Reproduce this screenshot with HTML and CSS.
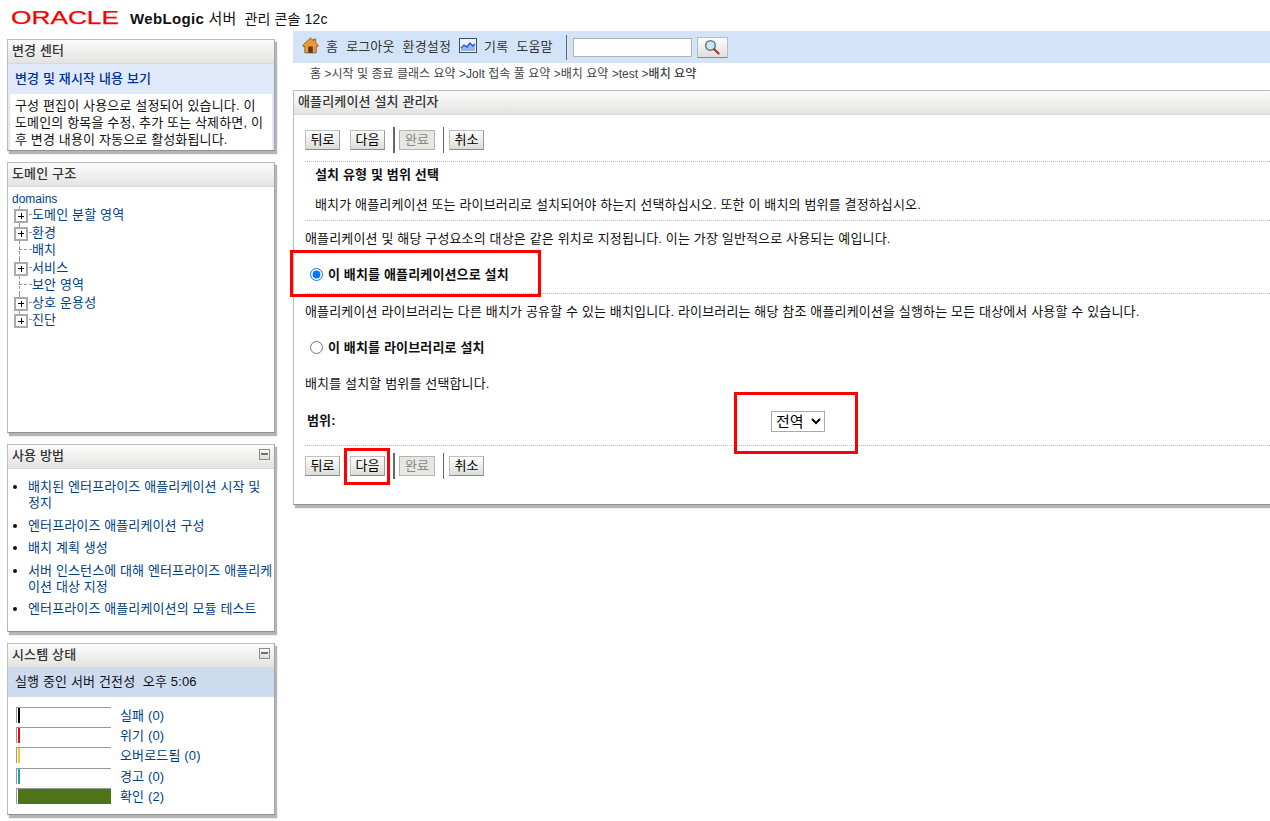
FILE: index.html
```html
<!DOCTYPE html>
<html lang="ko">
<head>
    <meta charset="UTF-8">
    <title>WebLogic 서버 관리 콘솔 12c</title>
    <link rel="stylesheet" href="styles.css">
</head>
<body>
    <!-- Page title -->
    <div class="brand">
        <svg class="oracle-logo" width="109" height="20" viewBox="0 0 109 20"><text x="0" y="16.5" textLength="108" lengthAdjust="spacingAndGlyphs">ORACLE</text></svg>
        <span class="brand-name"><b>WebLogic</b> 서버</span>
        <span class="brand-sub">관리 콘솔 12c</span>
    </div>

    <div class="layout">
        <!-- Left column -->
        <div class="sidebar">
            <div class="box box-change">
                <div class="box-head">변경 센터</div>
                <div class="change-link"><a href="#">변경 및 재시작 내용 보기</a></div>
                <div class="change-body">
                    <p>구성 편집이 사용으로 설정되어 있습니다. 이 도메인의 항목을 수정, 추가 또는 삭제하면, 이후 변경 내용이 자동으로 활성화됩니다.</p>
                </div>
            </div>

            <div class="box box-tree">
                <div class="box-head">도메인 구조</div>
                <div class="tree">
                    <a class="tree-root" href="#">domains</a>
                    <div class="tree-row"><span class="tree-plus"></span><a href="#">도메인 분할 영역</a></div>
                    <div class="tree-row"><span class="tree-plus"></span><a href="#">환경</a></div>
                    <div class="tree-row"><span class="tree-leaf"></span><a href="#">배치</a></div>
                    <div class="tree-row"><span class="tree-plus"></span><a href="#">서비스</a></div>
                    <div class="tree-row"><span class="tree-leaf"></span><a href="#">보안 영역</a></div>
                    <div class="tree-row"><span class="tree-plus"></span><a href="#">상호 운용성</a></div>
                    <div class="tree-row tree-last"><span class="tree-plus"></span><a href="#">진단</a></div>
                </div>
            </div>

            <div class="box box-help">
                <div class="box-head">사용 방법<span class="collapse"></span></div>
                <ul class="help-list">
                    <li><a href="#">배치된 엔터프라이즈 애플리케이션 시작 및 정지</a></li>
                    <li><a href="#">엔터프라이즈 애플리케이션 구성</a></li>
                    <li><a href="#">배치 계획 생성</a></li>
                    <li><a href="#">서버 인스턴스에 대해 엔터프라이즈 애플리케이션 대상 지정</a></li>
                    <li><a href="#">엔터프라이즈 애플리케이션의 모듈 테스트</a></li>
                </ul>
            </div>

            <div class="box box-status">
                <div class="box-head">시스템 상태<span class="collapse"></span></div>
                <div class="status-title">실행 중인 서버 건전성 &nbsp;오후 5:06</div>
                <div class="status-rows">
                    <div class="status-row"><span class="bar"><i class="bar-failed"></i></span><a href="#">실패 (0)</a></div>
                    <div class="status-row"><span class="bar"><i class="bar-critical"></i></span><a href="#">위기 (0)</a></div>
                    <div class="status-row"><span class="bar"><i class="bar-overload"></i></span><a href="#">오버로드됨 (0)</a></div>
                    <div class="status-row"><span class="bar"><i class="bar-warn"></i></span><a href="#">경고 (0)</a></div>
                    <div class="status-row"><span class="bar"><i class="bar-ok"></i></span><a href="#">확인 (2)</a></div>
                </div>
            </div>
        </div>

        <!-- Main column -->
        <div class="main">
            <div class="topbar">
                <svg class="icon-home" width="17" height="17" viewBox="0 0 18 18">
                    <path d="M9 1 0.6 9 2 10.6 3 9.7V16.8H15V9.7L16 10.6 17.4 9 14.5 6.3V2.2H12.2V4Z" fill="#ec9a35" stroke="#8a5a1e" stroke-width=".9"/>
                    <rect x="6.6" y="10" width="4.8" height="6.8" fill="#5a3a1a"/>
                </svg>
                <a href="#">홈</a>
                <a href="#">로그아웃</a>
                <a href="#">환경설정</a>
                <svg class="icon-chart" width="18" height="15" viewBox="0 0 18 15">
                    <rect x=".5" y=".5" width="17" height="14" fill="#eaf1fb" stroke="#3f4f5f"/>
                    <path d="M2 10 5 7 8 9 11 5 14 8 16 6V13H2Z" fill="#8fb8ee"/>
                    <path d="M2 10 5 7 8 9 11 5 14 8 16 6" fill="none" stroke="#1f55d8" stroke-width="1.3"/>
                </svg>
                <a href="#">기록</a>
                <a href="#">도움말</a>
                <span class="topbar-sep"></span>
                <input class="search-input" type="text">
                <button class="search-btn" type="button">
                    <svg width="16" height="16" viewBox="0 0 16 16">
                        <circle cx="6.5" cy="6.5" r="4.8" fill="#cfe6f5" stroke="#5f7f95" stroke-width="1.6"/>
                        <path d="M10 10 14.5 14.5" stroke="#a3452a" stroke-width="2.4" stroke-linecap="round"/>
                    </svg>
                </button>
            </div>

            <div class="crumbs">홈 &gt;시작 및 종료 클래스 요약 &gt;Jolt 접속 풀 요약 &gt;배치 요약 &gt;test &gt;<b>배치 요약</b></div>

            <div class="box box-main">
                <div class="box-head">애플리케이션 설치 관리자</div>
                <div class="main-body">
                    <div class="btn-row btn-row-top">
                        <button class="btn" type="button">뒤로</button>
                        <button class="btn" type="button">다음</button>
                        <span class="btn-sep-thick"></span>
                        <button class="btn" type="button" disabled>완료</button>
                        <span class="btn-sep"></span>
                        <button class="btn" type="button">취소</button>
                    </div>

                    <h2 class="step-title">설치 유형 및 범위 선택</h2>
                    <p class="step-desc">배치가 애플리케이션 또는 라이브러리로 설치되어야 하는지 선택하십시오. 또한 이 배치의 범위를 결정하십시오.</p>

                    <div class="section section-line">
                        <p>애플리케이션 및 해당 구성요소의 대상은 같은 위치로 지정됩니다. 이는 가장 일반적으로 사용되는 예입니다.</p>
                        <label class="radio-row"><input type="radio" name="kind" checked>이 배치를 애플리케이션으로 설치</label>
                    </div>
                    <div class="section">
                        <p>애플리케이션 라이브러리는 다른 배치가 공유할 수 있는 배치입니다. 라이브러리는 해당 참조 애플리케이션을 실행하는 모든 대상에서 사용할 수 있습니다.</p>
                        <label class="radio-row"><input type="radio" name="kind">이 배치를 라이브러리로 설치</label>
                    </div>
                    <div class="section section-scope">
                        <p>배치를 설치할 범위를 선택합니다.</p>
                        <div class="scope-row">
                            <b>범위:</b>
                            <select class="scope-select"><option>전역</option></select>
                        </div>
                    </div>

                    <div class="btn-row btn-row-bottom">
                        <button class="btn" type="button">뒤로</button>
                        <button class="btn" type="button">다음</button>
                        <span class="btn-sep-thick"></span>
                        <button class="btn" type="button" disabled>완료</button>
                        <span class="btn-sep"></span>
                        <button class="btn" type="button">취소</button>
                    </div>
                </div>

                <!-- Red annotation boxes drawn over the page -->
                <span class="mark mark-radio"></span>
                <span class="mark mark-select"></span>
                <span class="mark mark-next"></span>
            </div>
        </div>
    </div>
</body>
</html>
```

FILE: styles.css
```css
* {
    box-sizing: border-box;
}

html, body {
    height: 821px;
    overflow: hidden;
}

body {
    margin: 0;
    font-family: "Liberation Sans", "Noto Sans CJK KR", sans-serif;
    font-size: 13px;
    line-height: 16px;
    letter-spacing: .15px;
    color: #111;
    background-color: #fff;
}

a {
    color: #003f7f;
    text-decoration: none;
}

p {
    margin: 0;
}

/* Page title */
.brand {
    height: 31px;
    padding: 7px 0 0 11px;
    display: flex;
    align-items: flex-start;
}

.oracle-logo {
    margin-right: 10px;
}

.oracle-logo text {
    font-family: "Liberation Sans", sans-serif;
    font-size: 19px;
    letter-spacing: 0;
    fill: #f80000;
    stroke: #f80000;
    stroke-width: .25px;
}

.brand-name {
    font-size: 15px;
    line-height: 24px;
}

.brand-name b {
    letter-spacing: .35px;
}

.brand-sub {
    font-size: 14px;
    line-height: 24px;
    margin-left: 8px;
}

/* Layout */
.layout {
    display: flex;
    align-items: flex-start;
}

.sidebar {
    width: 268px;
    margin: 8px 0 0 7px;
    flex: none;
}

.main {
    width: 977px;
    margin-left: 18px;
    flex: none;
}

/* Boxes */
.box {
    position: relative;
    background-color: #fff;
    border: 1px solid #b9bdc0;
    border-bottom-color: #8d9194;
    border-right-color: #a5a8ab;
    box-shadow: 2px 3px 1px #b5b5b5;
    margin-bottom: 11px;
}

.box-head {
    position: relative;
    height: 24px;
    padding: 3px 4px;
    font-weight: 500;
    color: #333;
    background: linear-gradient(#fbfbfb, #e3e4e2);
    border-bottom: 1px solid #d9dad8;
}

.collapse {
    position: absolute;
    top: 4px;
    right: 4px;
    width: 11px;
    height: 11px;
    border: 1px solid #8b8f85;
    background: linear-gradient(#fff, #dcdcd4);
}

.collapse::after {
    content: "";
    position: absolute;
    left: 1px;
    top: 3px;
    width: 7px;
    height: 2px;
    background-color: #707468;
}

/* Change center */
.box-change {
    height: 112px;
    background-color: #dfe9f9;
}

.change-link {
    height: 30px;
    padding: 7px 7px;
    font-weight: 500;
}

.change-link a {
    color: #00309c;
}

.change-body {
    margin: 0 2px;
    padding: 3px 7px 3px 5px;
    height: 56px;
    background-color: #fff;
    line-height: 17px;
}

/* Domain tree */
.box-tree {
    height: 271px;
}

.tree {
    padding: 3px 4px;
}

.tree-root {
    display: block;
    height: 16px;
    font-size: 12px;
    line-height: 18px;
    letter-spacing: 0;
}

.tree-row {
    position: relative;
    height: 17.5px;
    line-height: 17.5px;
    padding-left: 20px;
}

/* dashed trunk of the tree */
.tree-row::before {
    content: "";
    position: absolute;
    left: 7px;
    top: 0;
    bottom: 0;
    border-left: 1px dashed #999;
}

.tree-last::before {
    bottom: 9px;
}

.tree-plus, .tree-leaf {
    position: absolute;
    top: 8px;
    left: 7px;
    width: 13px;
    border-top: 1px dashed #999;
}

.tree-plus::before {
    content: "";
    position: absolute;
    left: -5px;
    top: -6px;
    width: 10px;
    height: 10px;
    border: 2px solid #aaa;
    background:
        linear-gradient(#000, #000) center / 6px 1px no-repeat,
        linear-gradient(#000, #000) center / 1px 6px no-repeat,
        #fff;
}

/* How do I */
.box-help {
    height: 188px;
}

.help-list {
    margin: 0;
    padding: 10px 0 0 20px;
    list-style: disc;
    letter-spacing: .12px;
}

.help-list li {
    margin-bottom: 6.5px;
    line-height: 16px;
}

/* System status */
.box-status {
    height: 172px;
}

.status-title {
    height: 29px;
    padding: 6px 7px;
    background-color: #cddbef;
}

.status-rows {
    padding: 8px 0 0 8px;
}

.status-row {
    display: flex;
    align-items: center;
    height: 20.2px;
}

.status-row a {
    margin-top: 2px;
}

.bar {
    display: block;
    width: 95px;
    height: 16px;
    margin-right: 9px;
    border-top: 1px solid #999;
    border-left: 1px solid #999;
}

.bar i {
    display: block;
    width: 2px;
    height: 100%;
    margin-left: 1px;
}

.bar-failed { background-color: #000; }
.bar-critical { background-color: #f00; }
.bar-overload { background-color: #f5c518; }
.bar-warn { background-color: #1f9fc0; }

.bar .bar-ok {
    width: 93px;
    background-color: #4d7417;
}

/* Top toolbar */
.topbar {
    height: 32px;
    display: flex;
    align-items: center;
    padding-left: 9px;
    background-color: #d3e4f8;
}

.topbar a {
    color: #333;
    margin-right: 8px;
}

.icon-home {
    margin: -4px 7px 0 0;
}

.icon-chart {
    margin: -4px 7px 0 0;
}

.topbar-sep {
    width: 1px;
    height: 25px;
    margin: 0 6px 0 5px;
    background-color: #666;
}

.search-input {
    width: 119px;
    height: 19px;
    border: 1px solid #b5b5b5;
    background-color: #fff;
    padding: 0;
}

.search-btn {
    width: 31px;
    height: 21px;
    margin-left: 5px;
    padding: 0;
    border: 1px solid #bbb;
    border-bottom-color: #888;
    background: linear-gradient(#fdfdfd, #dfe0dc);
    display: flex;
    align-items: center;
    justify-content: center;
}

.crumbs {
    height: 27px;
    padding: 3px 0 0 17px;
    font-size: 12px;
    letter-spacing: .03px;
    color: #444;
}

.crumbs b {
    font-weight: 500;
}

/* Main panel */
.box-main {
    height: 415px;
    margin: 0;
    border-right: 0;
}

.main-body {
    padding: 0 0 0 11px;
}

.btn-row {
    display: flex;
    align-items: center;
}

.btn-row-top {
    height: 47px;
    border-bottom: 1px dotted #bbb;
    padding-top: 3px;
}

.btn-row-bottom {
    height: 40px;
    border-top: 1px dotted #bbb;
}

.btn {
    height: 20px;
    width: 35px;
    margin-right: 10px;
    padding: 0;
    font: 13px/18px "Liberation Sans", "Noto Sans CJK KR", sans-serif;
    color: #000;
    background: linear-gradient(#fdfdfd, #dcddd8);
    border: 1px solid #c0c0bc;
    border-bottom-color: #8a8a86;
    border-right-color: #9a9a96;
}

.btn:disabled {
    width: 36px;
    color: #888;
    border-color: #b5b5b0;
    background: #e6e7e2;
}

.btn-sep-thick {
    width: 2px;
    height: 26px;
    margin: 0 4px 0 -2px;
    background-color: #666;
}

.btn-sep {
    width: 1px;
    height: 26px;
    margin: 0 5px 0 -2px;
    background-color: #666;
}

.step-title {
    margin: 0;
    padding: 5px 0 0 10px;
    font-size: 13px;
    line-height: 16px;
    font-weight: 700;
}

.step-desc {
    padding: 14px 0 7px 10px;
    border-bottom: 1px dotted #bbb;
}

.section-line {
    border-bottom: 1px dotted #bbb;
}

.section p {
    padding-top: 10px;
    height: 35px;
}

.radio-row {
    display: flex;
    align-items: center;
    height: 37px;
    font-weight: 700;
}

.radio-row input {
    width: 13px;
    height: 13px;
    margin: 0 5px 0 5px;
}

.section-scope p {
    height: 28px;
}

.scope-row {
    display: flex;
    align-items: center;
    height: 51px;
    padding-top: 3px;
}

.scope-row b {
    width: 464px;
    margin-left: 2px;
    font-weight: 700;
}

.scope-select {
    width: 54px;
    height: 21px;
    font: 15px "Liberation Sans", "Noto Sans CJK KR", sans-serif;
    background-color: #fff;
    border: 1px solid #aaa;
}

/* Red annotation boxes */
.mark {
    position: absolute;
    border: 3px solid #f00;
}

.mark-radio {
    left: -4px;
    top: 159px;
    width: 251px;
    height: 47px;
}

.mark-select {
    left: 440px;
    top: 301px;
    width: 124px;
    height: 62px;
}

.mark-next {
    left: 50px;
    top: 357px;
    width: 46px;
    height: 37px;
}
```
